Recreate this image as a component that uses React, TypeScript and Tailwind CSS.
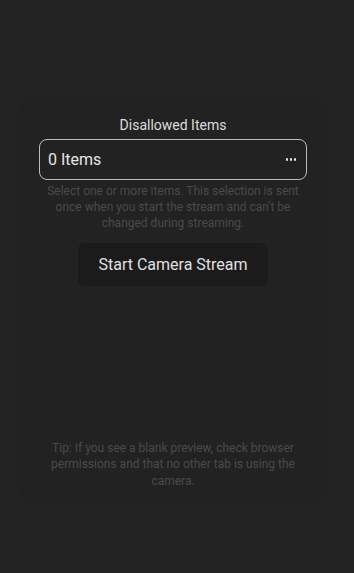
import React from "react";

const App = () => {
  return (
    <div
      className="min-h-[573px] w-full bg-[#232323] pt-[100px]"
      style={{ fontFamily: "Roboto, 'Noto Sans', sans-serif" }}
    >
      {/* Card */}
      <div className="ml-[22px] flex h-[400px] w-[302px] flex-col rounded-[16px] bg-[#222222] px-[17px] pt-[16px] pb-[11px] shadow-[0_1px_6px_rgba(0,0,0,0.12)]">
        <div className="text-center text-[14px] leading-[18px] text-[#dcdcdc]">
          Disallowed Items
        </div>
        <div className="mt-[5px] flex h-[41px] items-center justify-between rounded-[8px] border-[1.5px] border-[#bdbdbd] pr-[10px] pl-[8px]">
          <span className="text-[16px] text-[#e6e6e6]">0 Items</span>
          <span className="flex gap-[1.5px]">
            <span className="h-[2.5px] w-[2.5px] rounded-full bg-[#e6e6e6]" />
            <span className="h-[2.5px] w-[2.5px] rounded-full bg-[#e6e6e6]" />
            <span className="h-[2.5px] w-[2.5px] rounded-full bg-[#e6e6e6]" />
          </span>
        </div>
        <p className="mt-[3px] text-center text-[12px] leading-[16px] text-[#4a4a4a]">
          Select one or more items. This selection is sent once when you start
          the stream and can't be changed during streaming.
        </p>
        <div className="mt-[12px] flex justify-center">
          <button className="h-[43px] w-[190px] rounded-[7px] bg-[#1b1b1b] text-[16px] text-[#e0e0e0]">
            Start Camera Stream
          </button>
        </div>
        <div className="flex-1" />
        <p className="px-[8px] text-center text-[12px] leading-[16.5px] text-[#4a4a4a]">
          Tip: If you see a blank preview, check browser permissions and that no
          other tab is using the camera.
        </p>
      </div>
    </div>
  );
};

export default App;
